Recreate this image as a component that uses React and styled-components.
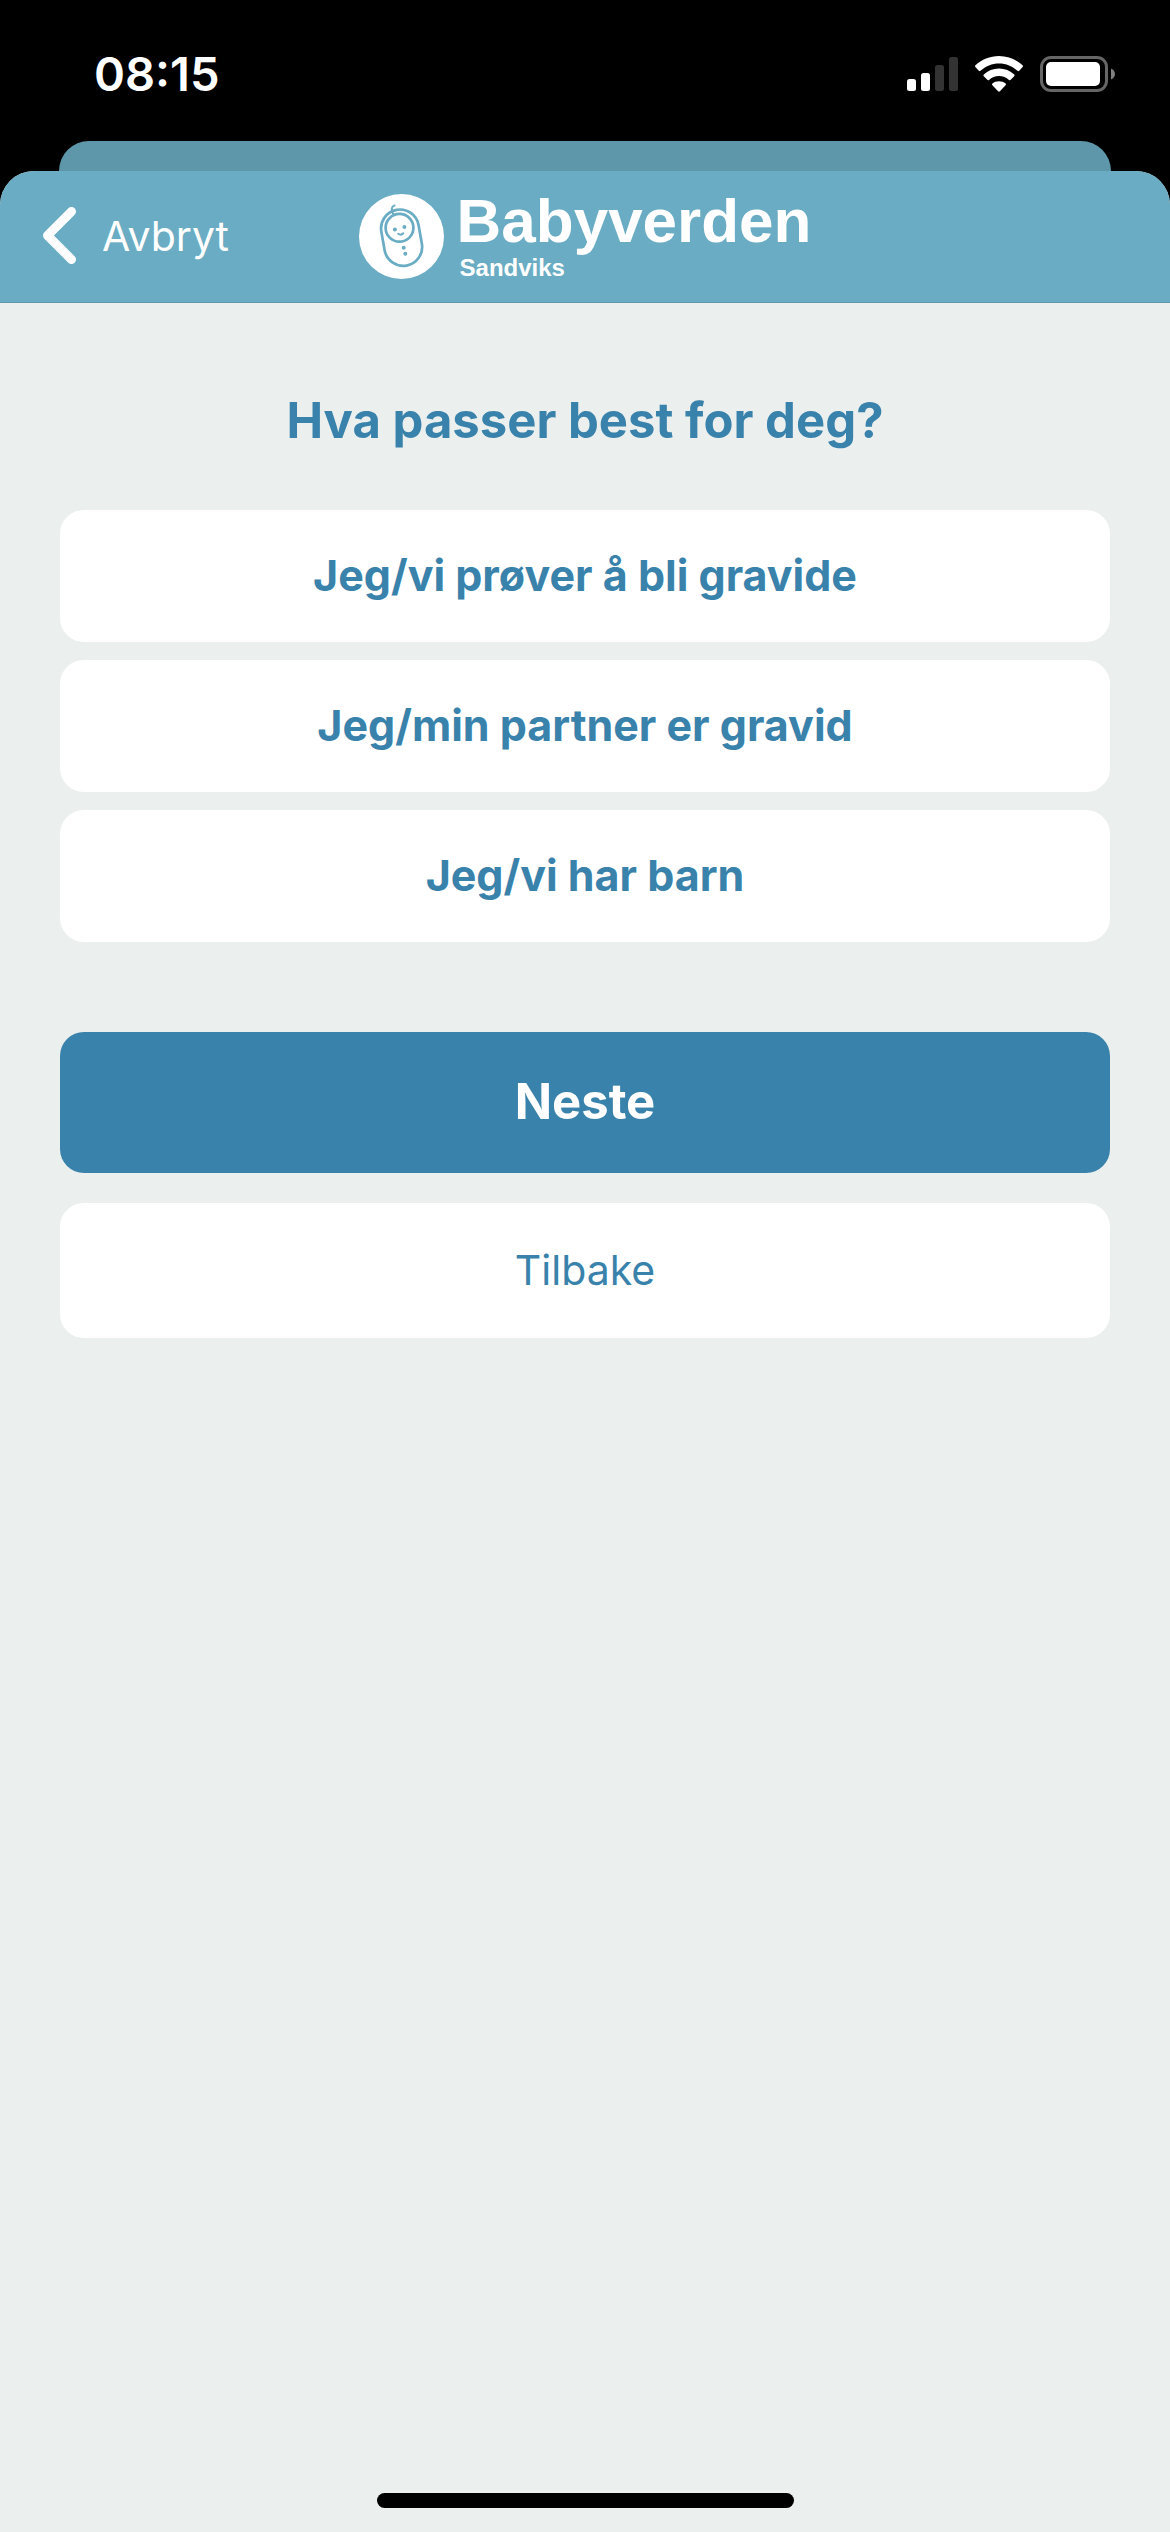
import React from "react";
import styled, { createGlobalStyle } from "styled-components";

const colors = {
  teal: "#69acc3",
  tealDim: "#5d97a9",
  blue: "#3982ab",
  page: "#ebf0ee",
};

const GlobalStyle = createGlobalStyle`
  * { box-sizing: border-box; }
  body {
    margin: 0;
    background: #000;
    font-family: Inter, "Liberation Sans", sans-serif;
    -webkit-font-smoothing: antialiased;
  }
  button { font-family: inherit; border: 0; margin: 0; cursor: pointer; }
`;

const Screen = styled.div`
  min-height: 100vh;
  display: flex;
  flex-direction: column;
  background: #000;
`;

const StatusBar = styled.div`
  height: 141px;
  padding: 7px 55px 0 94px;
  display: flex;
  align-items: center;
  justify-content: space-between;
  color: #fff;
`;

const Clock = styled.time`
  font-size: 47px;
  line-height: 56px;
  font-weight: 600;
`;

const StatusIcons = styled.div`
  display: flex;
  align-items: center;
  gap: 17px;

  svg { display: block; }
`;

const BackCard = styled.div`
  height: 30px;
  margin: 0 59px;
  border-radius: 30px 30px 0 0;
  background: ${colors.tealDim};
`;

const Sheet = styled.div`
  flex: 1;
  display: flex;
  flex-direction: column;
  border-radius: 34px 34px 0 0;
  overflow: hidden;
  background: ${colors.page};
`;

const Header = styled.header`
  height: 132px;
  padding: 0 42px;
  display: grid;
  grid-template-columns: 1fr auto 1fr;
  align-items: center;
  background: ${colors.teal};
  border-bottom: 1px solid ${colors.tealDim};
`;

const CancelButton = styled.button`
  justify-self: start;
  display: flex;
  align-items: center;
  gap: 26px;
  padding: 0 0 2px;
  background: none;
  color: #fff;
  font-size: 41px;
  line-height: 56px;

  svg { display: block; }
`;

const Brand = styled.div`
  display: flex;
  align-items: center;
  gap: 13px;
  color: #fff;
  font-family: "Liberation Sans", Arial, sans-serif;
  font-weight: 700;

  svg { display: block; }
`;

const BrandText = styled.div`
  display: flex;
  flex-direction: column;
`;

const BrandName = styled.span`
  font-size: 62px;
  line-height: 62px;
`;

const BrandOwner = styled.span`
  padding-left: 3px;
  font-size: 24px;
  line-height: 32px;
`;

const Content = styled.main`
  flex: 1;
  display: flex;
  flex-direction: column;
  padding: 88px 60px 0;
`;

const Title = styled.h1`
  margin: 0 0 59px;
  font-size: 49px;
  line-height: 60px;
  font-weight: 700;
  text-align: center;
  color: ${colors.blue};
`;

const Stack = styled.div`
  display: flex;
  flex-direction: column;
  gap: ${(p) => p.$gap}px;
`;

const Options = styled(Stack)`
  margin-bottom: 90px;
`;

const Button = styled.button`
  width: 100%;
  border-radius: 24px;
  padding: 0 24px 2px;
  text-align: center;
  color: ${colors.blue};
  background: #fff;
`;

const OptionButton = styled(Button)`
  height: 132px;
  font-size: 43px;
  font-weight: 700;
`;

const PrimaryButton = styled(Button)`
  height: 141px;
  color: #fff;
  background: ${colors.blue};
  font-size: 49px;
  font-weight: 700;
`;

const SecondaryButton = styled(Button)`
  height: 135px;
  font-size: 41px;
  font-weight: 400;
`;

const HomeIndicator = styled.div`
  align-self: center;
  width: 417px;
  height: 15px;
  margin-bottom: 24px;
  border-radius: 8px;
  background: #000;
`;

const SignalIcon = () => (
  <svg width="51" height="36" viewBox="0 0 51 36" fill="#fff" aria-hidden="true">
    <rect x="0" y="23" width="9" height="12" rx="2.5" />
    <rect x="14" y="17" width="9" height="18" rx="2.5" />
    <rect x="28" y="9" width="9" height="26" rx="2.5" fill="#333" />
    <rect x="42" y="1" width="9" height="34" rx="2.5" fill="#333" />
  </svg>
);

const WifiIcon = () => (
  <svg width="48" height="36" viewBox="0 0 48 36" fill="#fff" aria-hidden="true">
    <path d="M24 0C33 0 41.500 3.500 47.600 9.300C48.100 9.800 48.100 10.600 47.600 11.100L44.200 14.800C43.700 15.300 43 15.300 42.500 14.800C37.500 10.200 31 7.500 24 7.500S10.500 10.200 5.500 14.800C5 15.300 4.300 15.300 3.800 14.800L0.400 11.100C-0.100 10.600 -0.100 9.800 0.400 9.300C6.500 3.500 15 0 24 0Z" />
    <path d="M24 12.600C29.900 12.600 35.200 14.800 39.200 18.500C39.700 19 39.700 19.700 39.200 20.200L35.700 23.800C35.200 24.300 34.500 24.300 34 23.900C31.300 21.500 27.800 20 24 20S16.700 21.500 14 23.900C13.500 24.300 12.800 24.300 12.300 23.800L8.800 20.200C8.300 19.700 8.300 19 8.800 18.500C12.800 14.800 18.100 12.600 24 12.600Z" />
    <path d="M24 25.200C26.500 25.200 28.800 26 30.600 27.500C31.100 27.900 31.100 28.700 30.600 29.200L24.900 35.200C24.400 35.800 23.600 35.800 23.100 35.200L17.400 29.200C16.900 28.700 16.900 27.900 17.400 27.500C19.200 26 21.500 25.200 24 25.200Z" />
  </svg>
);

const BatteryIcon = () => (
  <svg width="75" height="36" viewBox="0 0 75 36" aria-hidden="true">
    <rect x="1.500" y="1.500" width="65" height="33" rx="9.500" fill="none" stroke="#666" strokeWidth="3" />
    <rect x="6" y="6" width="54" height="24" rx="5" fill="#fff" />
    <path d="M71 12.500C73.500 13.500 75 15.600 75 18S73.500 22.500 71 23.500Z" fill="#808080" />
  </svg>
);

const ChevronIcon = () => (
  <svg width="34" height="57" viewBox="0 0 34 57" aria-hidden="true">
    <path
      d="M29.500 4.500L5.500 28.500L29.500 52.500"
      fill="none"
      stroke="#fff"
      strokeWidth="9"
      strokeLinecap="round"
      strokeLinejoin="round"
    />
  </svg>
);

const BabyLogo = () => (
  <svg width="85" height="85" viewBox="0 0 85 85" fill="none" stroke={colors.teal} strokeWidth="2.7" strokeLinecap="round" aria-hidden="true">
    <circle cx="42.500" cy="42.500" r="42.500" fill="#fff" stroke="none" />
    <rect x="23.700" y="15.400" width="37.800" height="56.600" rx="18.900" transform="rotate(-10 42.600 43.700)" />
    <circle cx="40.500" cy="33.800" r="13.900" />
    <path d="M35.500 11.500C32.500 12.500 31.800 15.500 34 19.500" strokeWidth="2" />
    <path d="M39.200 39.800C40.800 41 43 40.700 44.300 39.300" strokeWidth="2" />
    <g fill={colors.teal} stroke="none">
      <circle cx="35.900" cy="35.400" r="2" />
      <circle cx="45.400" cy="33" r="2" />
      <circle cx="44.700" cy="53.700" r="2" />
      <circle cx="46.300" cy="59.700" r="2" />
    </g>
  </svg>
);

const options = [
  "Jeg/vi prøver å bli gravide",
  "Jeg/min partner er gravid",
  "Jeg/vi har barn",
];

export default function App() {
  return (
    <>
      <GlobalStyle />
      <Screen lang="no">
        <StatusBar>
          <Clock>08:15</Clock>
          <StatusIcons>
            <SignalIcon />
            <WifiIcon />
            <BatteryIcon />
          </StatusIcons>
        </StatusBar>
        <BackCard />
        <Sheet>
          <Header>
            <CancelButton type="button">
              <ChevronIcon />
              Avbryt
            </CancelButton>
            <Brand>
              <BabyLogo />
              <BrandText>
                <BrandName>Babyverden</BrandName>
                <BrandOwner>Sandviks</BrandOwner>
              </BrandText>
            </Brand>
          </Header>
          <Content>
            <Title>Hva passer best for deg?</Title>
            <Options $gap={18}>
              {options.map((label) => (
                <OptionButton type="button" key={label}>
                  {label}
                </OptionButton>
              ))}
            </Options>
            <Stack $gap={30}>
              <PrimaryButton type="button">Neste</PrimaryButton>
              <SecondaryButton type="button">Tilbake</SecondaryButton>
            </Stack>
          </Content>
          <HomeIndicator />
        </Sheet>
      </Screen>
    </>
  );
}
